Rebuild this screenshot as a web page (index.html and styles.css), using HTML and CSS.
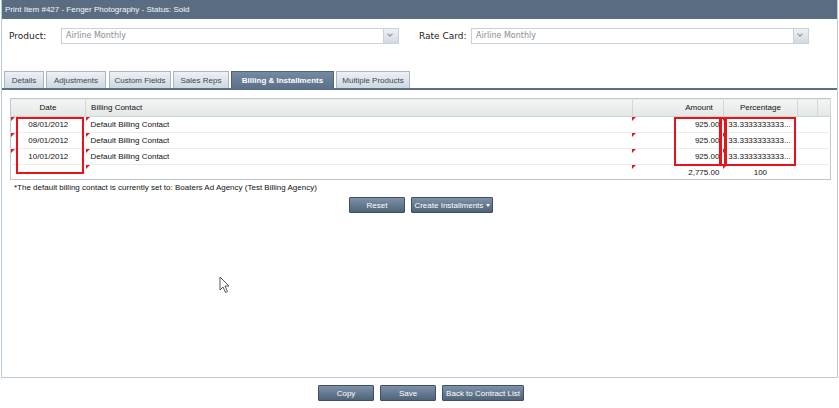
FILE: index.html
```html
<!DOCTYPE html>
<html lang="en">
<head>
    <meta charset="UTF-8">
    <title>Print Item #427</title>
    <link rel="stylesheet" href="styles.css">
</head>
<body>
    <div class="panel">
        <div class="titlebar">Print Item #427 - Fenger Photography - Status: Sold</div>

        <div class="fields">
            <div class="field">
                <label>Product:</label>
                <div class="select"><span>Airline Monthly</span><i class="arrow"></i></div>
            </div>
            <div class="field">
                <label>Rate Card:</label>
                <div class="select"><span>Airline Monthly</span><i class="arrow"></i></div>
            </div>
        </div>

        <div class="tabs">
            <div class="tab t1">Details</div>
            <div class="tab t2">Adjustments</div>
            <div class="tab t3">Custom Fields</div>
            <div class="tab t4">Sales Reps</div>
            <div class="tab t5 active">Billing &amp; Installments</div>
            <div class="tab t6">Multiple Products</div>
        </div>
        <div class="tabline"></div>

        <div class="content">
            <div class="grid-wrap">
                <table class="grid">
                    <colgroup>
                        <col class="w-date">
                        <col class="w-contact">
                        <col class="w-amount">
                        <col class="w-pct">
                        <col class="w-x1">
                        <col class="w-x2">
                    </colgroup>
                    <thead>
                        <tr>
                            <th class="c-date">Date</th>
                            <th class="c-contact">Billing Contact</th>
                            <th class="c-amount">Amount</th>
                            <th class="c-pct">Percentage</th>
                            <th></th>
                            <th></th>
                        </tr>
                    </thead>
                    <tbody>
                        <tr>
                            <td class="c-date dirty">08/01/2012</td>
                            <td class="c-contact dirty">Default Billing Contact</td>
                            <td class="c-amount dirty">925.00</td>
                            <td class="c-pct dirty">33.3333333333...</td>
                            <td></td><td></td>
                        </tr>
                        <tr>
                            <td class="c-date dirty">09/01/2012</td>
                            <td class="c-contact dirty">Default Billing Contact</td>
                            <td class="c-amount dirty">925.00</td>
                            <td class="c-pct dirty">33.3333333333...</td>
                            <td></td><td></td>
                        </tr>
                        <tr>
                            <td class="c-date dirty">10/01/2012</td>
                            <td class="c-contact dirty">Default Billing Contact</td>
                            <td class="c-amount dirty">925.00</td>
                            <td class="c-pct dirty">33.3333333333...</td>
                            <td></td><td></td>
                        </tr>
                        <tr class="total">
                            <td class="c-date"></td>
                            <td class="c-contact dirty"></td>
                            <td class="c-amount dirty">2,775.00</td>
                            <td class="c-pct dirty center">100</td>
                            <td></td><td></td>
                        </tr>
                    </tbody>
                </table>

                <!-- highlight boxes drawn over the grid -->
                <div class="mark mark-date"></div>
                <div class="mark mark-amount"></div>
                <div class="mark mark-gap"></div>
                <div class="mark mark-pct"></div>
            </div>

            <p class="note">*The default billing contact is currently set to: Boaters Ad Agency (Test Billing Agency)</p>

            <div class="actions">
                <button class="btn btn-reset">Reset</button>
                <button class="btn btn-create">Create Installments <span class="caret"></span></button>
            </div>
        </div>

        <svg class="cursor" width="12" height="18" viewBox="0 0 12 18">
            <path d="M1 1 L1 14 L4 11 L6.5 16.5 L8.5 15.5 L6 10 L10 10 Z" fill="#fff" stroke="#555" stroke-width="1"/>
        </svg>
    </div>

    <div class="footer">
        <button class="btn btn-foot">Copy</button>
        <button class="btn btn-foot">Save</button>
        <button class="btn btn-back">Back to Contract List</button>
    </div>
</body>
</html>
```

FILE: styles.css
```css
body {
    margin: 0;
    padding: 0;
    font-family: "Liberation Sans", Arial, sans-serif;
    font-size: 8px;
    color: #111;
    background: #fff;
}

.panel {
    position: relative;
    margin: 0 1px;
    height: 378px;
    border: 1px solid #bccbdb;
    border-top: none;
    box-sizing: border-box;
}

.titlebar {
    height: 19px;
    line-height: 19px;
    padding-left: 3px;
    background: #5a6c82;
    color: #f6f7f9;
    font-size: 8px;
}

.fields {
    display: flex;
    padding: 8px 0 0 7px;
    height: 17px;
}
.field {
    display: flex;
    align-items: center;
    width: 410px;
}
.field label {
    font-family: "DejaVu Sans", sans-serif;
    font-size: 9px;
    width: 52px;
    color: #222;
}
.select {
    position: relative;
    display: flex;
    align-items: center;
    width: 338px;
    height: 16px;
    border: 1px solid #c9d2dc;
    box-sizing: border-box;
    background: #fff;
}
.select span {
    padding-left: 4px;
    color: #8c8c8c;
    font-family: "DejaVu Sans", sans-serif;
    font-size: 8px;
}
.arrow {
    position: absolute;
    right: 0;
    top: 0;
    width: 14px;
    height: 14px;
    background: linear-gradient(#eef1f4, #d3d9e0);
    border-left: 1px solid #c9d2dc;
}
.arrow::after {
    content: "";
    position: absolute;
    left: 4px;
    top: 3px;
    width: 3px;
    height: 3px;
    border-right: 1px solid #8592a0;
    border-bottom: 1px solid #8592a0;
    transform: rotate(45deg);
}

.tabs {
    display: flex;
    gap: 2px;
    padding: 27px 0 0 2px;
}
.tab {
    height: 17px;
    line-height: 17px;
    padding: 0;
    text-align: center;
    white-space: nowrap;
    border: 1px solid #a9b6c4;
    border-bottom: none;
    background: linear-gradient(#eef1f4, #cfd7df);
    color: #3a4756;
    box-sizing: border-box;
}
.t1 { width: 40px; }
.t2 { width: 60px; }
.t3 { width: 62px; margin-left: 1px; }
.t4 { width: 56px; }
.t5 { width: 103px; }
.t6 { width: 74px; }
.tab.active {
    background: linear-gradient(#7489a2, #5b7089);
    border-color: #4e6178;
    color: #fff;
    font-weight: bold;
}
.tabline {
    height: 2px;
    background: #5b7089;
}

.content {
    padding: 8px 7px 0 8px;
}

.grid-wrap {
    position: relative;
}
.grid {
    border-collapse: collapse;
    border: 1px solid #bcc6cf;
    width: 821px;
    table-layout: fixed;
}
.w-date { width: 75px; }
.w-contact { width: 546px; }
.w-amount { width: 91px; }
.w-pct { width: 74px; }
.w-x1 { width: 20px; }
.w-x2 { width: 13px; }

.grid th {
    height: 17px;
    padding: 0;
    font-weight: normal;
    background: linear-gradient(#f3f5f4, #e2e7e5);
    border-right: 1px solid #d0d6da;
    border-bottom: 1px solid #cfd6d8;
    text-align: center;
}
.grid th.c-contact {
    text-align: left;
    padding-left: 5px;
}
.grid th.c-amount {
    text-align: right;
    padding-right: 10px;
}

.grid td {
    position: relative;
    height: 15px;
    padding: 0;
    border-bottom: 1px solid #ececec;
    white-space: nowrap;
    overflow: hidden;
}
.grid tr.total td {
    border-bottom: none;
    height: 14px;
}
.grid td.c-date { text-align: center; }
.grid td.c-contact { padding-left: 5px; }
.grid td.c-amount { text-align: right; padding-right: 4px; }
.grid td.c-pct { padding-left: 5px; }
.grid td.center { text-align: center; padding: 0; }

.grid td.dirty::before {
    content: "";
    position: absolute;
    left: 0;
    top: 0;
    border-top: 4px solid #d81e1e;
    border-right: 4px solid transparent;
}

.mark {
    position: absolute;
    border: 2px solid #e8121b;
    box-sizing: border-box;
}
.mark-date {
    left: 6px;
    top: 19px;
    width: 68px;
    height: 57px;
}
.mark-amount {
    left: 664px;
    top: 19px;
    width: 47px;
    height: 49px;
}
.mark-gap {
    left: 710px;
    top: 19px;
    width: 6px;
    height: 49px;
}
.mark-pct {
    left: 715px;
    top: 19px;
    width: 71px;
    height: 49px;
}

.note {
    margin: 3px 0 0 4px;
    font-size: 8px;
}

.actions {
    display: flex;
    justify-content: center;
    gap: 6px;
    margin-top: 5px;
    padding-left: 2px;
}

.btn {
    height: 16px;
    padding: 0;
    border: 1px solid #3e4f63;
    border-radius: 1px;
    background: linear-gradient(#7d91a8, #4f6379);
    color: #fff;
    font-family: "Liberation Sans", Arial, sans-serif;
    font-size: 8px;
    box-sizing: border-box;
}
.btn-reset { width: 56px; }
.btn-create { width: 82px; }
.caret {
    display: inline-block;
    vertical-align: middle;
    border-top: 3px solid #fff;
    border-left: 2px solid transparent;
    border-right: 2px solid transparent;
}

.cursor {
    position: absolute;
    left: 217px;
    top: 276px;
}

.footer {
    display: flex;
    justify-content: center;
    gap: 6px;
    padding-top: 7px;
    padding-left: 3px;
}
.btn-foot { width: 56px; }
.btn-back { width: 82px; }
```
